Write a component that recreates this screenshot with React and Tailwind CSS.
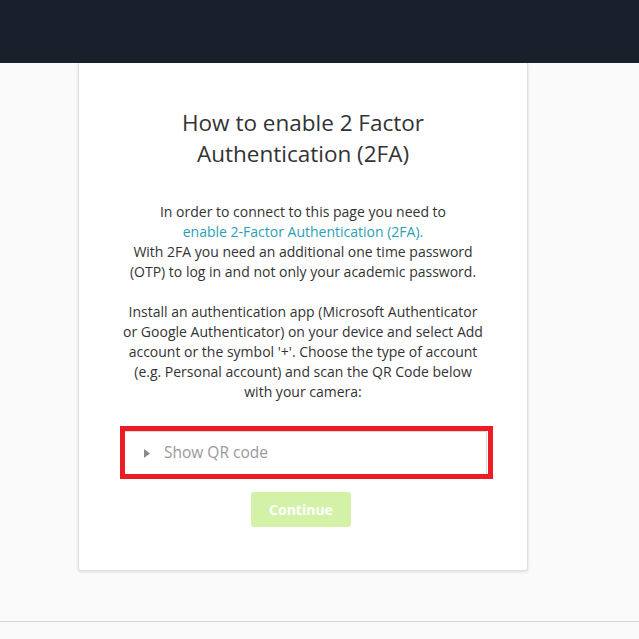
import { useState } from "react";

function App() {
  const [open, setOpen] = useState(false);

  return (
    <div className="min-h-screen bg-[#fafafa] text-[#333] font-['Open_Sans',sans-serif]">
      <header className="h-[63px] bg-[#1a202b]" />

      <main className="h-[558px]">
        <div className="ml-[78px] w-[450px] bg-white border border-t-0 border-[#e0e0e0] rounded-b-[3px] shadow-[0_1px_3px_rgba(0,0,0,0.12)] px-6 pt-[44px] pb-[43px] text-center">
          <h1 className="text-[22.5px] leading-[31px] font-normal text-[#333] px-[60px]">
            How to enable 2 Factor Authentication (2FA)
          </h1>

          <div className="mt-[33px] text-[14px] leading-[20px] whitespace-nowrap">
            <p>
              In order to connect to this page you need to
              <br />
              <a href="#" className="text-[#2aa0b4]">
                enable 2-Factor Authentication (2FA).
              </a>
              <br />
              With 2FA you need an additional one time password
              <br />
              (OTP) to log in and not only your academic password.
            </p>
            <p className="mt-[20px]">
              Install an authentication app (Microsoft Authenticator
              <br />
              or Google Authenticator) on your device and select Add
              <br />
              account or the symbol '+'. Choose the type of account
              <br />
              (e.g. Personal account) and scan the QR Code below
              <br />
              with your camera:
            </p>
          </div>

          <div className="mt-[24px] ml-[17px] mr-[10px] border-[5px] border-[#ec1c24] bg-white">
            <div className="h-[43px] border-r border-t border-[#d8d8d8] rounded-tr-[2px] mr-[1px] flex items-center text-left">
              <button
                onClick={() => setOpen(!open)}
                className="flex items-center gap-[14px] pl-[19px] text-[15.5px] text-[#999]"
              >
                <svg width="6" height="9" viewBox="0 0 6 9" className={open ? "rotate-90" : ""}>
                  <path d="M0 0 L6 4.5 L0 9 Z" fill="#8a8a8a" />
                </svg>
                <span>Show QR code</span>
              </button>
            </div>
          </div>

          <button
            disabled
            className="mt-[13px] mr-[4px] w-[100px] h-[35px] rounded-[3px] bg-[#d3f2a8] text-white font-bold text-[14px]"
          >
            Continue
          </button>
        </div>
      </main>

      <footer className="border-t border-[#d6d6d6] h-[18px] bg-[#fafafa]" />
    </div>
  );
}

export default App;
